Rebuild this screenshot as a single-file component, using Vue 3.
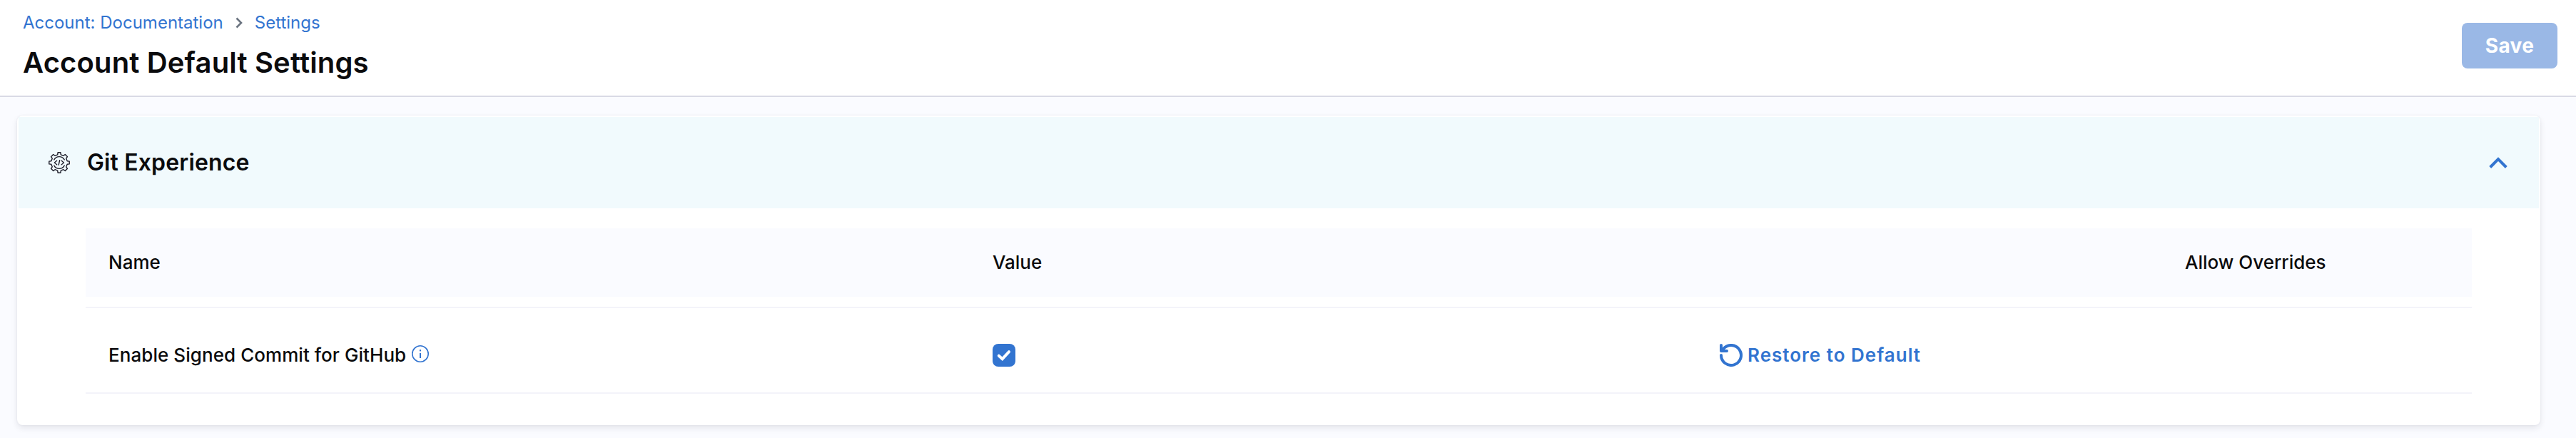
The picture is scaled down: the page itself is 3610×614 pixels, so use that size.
<script setup>
const columns = ['Name', 'Value', '', 'Allow Overrides']
</script>

<template>
  <div class="page">
    <header class="top">
      <div class="heading">
        <nav class="crumbs">
          <a class="link">Account: Documentation</a>
          <svg class="sep" width="10" height="16" viewBox="0 0 10 16">
            <path d="M1.5 1.5L8 8L1.5 14.5" fill="none" stroke="#6b7480" stroke-width="2.6" />
          </svg>
          <a class="link">Settings</a>
        </nav>
        <h1 class="title">Account Default Settings</h1>
      </div>
      <button class="save" disabled>Save</button>
    </header>

    <main class="content">
      <section class="card">
        <div class="card-head">
          <svg class="gear" width="30" height="30" viewBox="0 0 30 30" fill="none" stroke="#1c1c28" stroke-width="1.4" stroke-linejoin="round" stroke-linecap="round">
            <path d="M12.7 3.8L13.1 .8H16.9L17.3 3.8L20.9 5.3L23.3 3.5L26.5 6.7L24.7 9.1L26.2 12.7L29.2 13.1V16.9L26.2 17.3L24.7 20.9L26.5 23.3L23.3 26.5L20.9 24.7L17.3 26.2L16.9 29.2H13.1L12.7 26.2L9.1 24.7L6.7 26.5L3.5 23.3L5.3 20.9L3.8 17.3L.8 16.9V13.1L3.8 12.7L5.3 9.1L3.5 6.7L6.7 3.5L9.1 5.3Z" />
            <path d="M7.8 10.9A8.2 8.2 0 0 1 22.2 10.9M22.2 19.1A8.2 8.2 0 0 1 7.8 19.1" />
            <path d="M11.6 12.3L8.4 15L11.6 17.7M18.2 12.3L21.4 15L18.2 17.7M15.6 11.8L14.2 18.2" />
          </svg>
          <h2 class="card-title">Git Experience</h2>
          <svg class="caret" width="26" height="17" viewBox="0 0 26 17">
            <path d="M1.7 14.5L13 3.2L24.3 14.5" fill="none" stroke="#3274d0" stroke-width="4" />
          </svg>
        </div>

        <div class="table">
          <div class="row thead">
            <div v-for="(c, i) in columns" :key="i" class="cell">{{ c }}</div>
          </div>
          <div class="row setting">
            <div class="cell name">
              <span class="label">Enable Signed Commit for GitHub</span>
              <svg class="info" width="24" height="24" viewBox="0 0 24 24">
                <circle cx="12" cy="12" r="11.2" fill="none" stroke="#3274d0" stroke-width="1.6" />
                <rect x="10.9" y="6.1" width="2.2" height="2.4" rx=".8" fill="#3274d0" />
                <rect x="11" y="11" width="2" height="7" fill="#3274d0" />
              </svg>
            </div>
            <div class="cell">
              <span class="check">
                <svg width="32" height="32" viewBox="0 0 32 32">
                  <path d="M8.8 16.7L13.7 21.2L23 11.2" fill="none" stroke="#fff" stroke-width="4" stroke-linecap="round" stroke-linejoin="miter" />
                </svg>
              </span>
            </div>
            <div class="cell restore">
              <svg width="32" height="32" viewBox="0 0 32 32" fill="none" stroke="#3274d0" stroke-width="4" stroke-linecap="round" stroke-linejoin="round">
                <path d="M2 16A14 14 0 1 0 5 7.3L3.5 9.2" />
                <path d="M2 2V10H10" />
              </svg>
              <span class="label">Restore to Default</span>
            </div>
            <div class="cell"></div>
          </div>
        </div>
      </section>
    </main>
  </div>
</template>

<style>
body {
  margin: 0;
  background: #fafbff;
}
</style>

<style scoped>
.page {
  box-sizing: border-box;
  height: 614px;
  overflow: hidden;
  font-family: Inter, "Liberation Sans", sans-serif;
  color: #0b0b0d;
  background: #fafbff;
}
.top {
  box-sizing: border-box;
  height: 136px;
  padding: 16px 26px 0 32px;
  display: flex;
  justify-content: space-between;
  align-items: flex-start;
  background: #fff;
  border-bottom: 2px solid #d9dae5;
}
.crumbs {
  display: flex;
  align-items: center;
  height: 32px;
  font-size: 24px;
  line-height: 32px;
}
.link {
  color: #3274d0;
}
.sep {
  margin: 0 17px;
}
.title {
  margin: 16px 0 0;
  font-size: 40px;
  line-height: 48px;
  font-weight: 600;
  letter-spacing: 0.14px;
}
.save {
  width: 134px;
  height: 64px;
  margin-top: 16px;
  padding: 0;
  border: 0;
  border-radius: 8px;
  background: #9ab8e6;
  color: #fff;
  font: 700 28px/64px Inter, "Liberation Sans", sans-serif;
  letter-spacing: 0.4px;
}
.content {
  padding: 26px 50px 0 24px;
}
.card {
  box-sizing: border-box;
  height: 434px;
  border: 2px solid #fff;
  border-radius: 8px;
  background: #fff;
  box-shadow: 0 4px 8px rgba(40, 41, 61, 0.1), 0 0 3px rgba(40, 41, 61, 0.06);
}
.card-head {
  box-sizing: border-box;
  height: 128px;
  padding: 0 44px 0 42px;
  display: flex;
  align-items: center;
  background: #f1fafd;
}
.card-title {
  flex: 1;
  margin: 0 0 0 24px;
  font-size: 32px;
  line-height: 40px;
  font-weight: 600;
  letter-spacing: 0.14px;
}
.table {
  margin: 28px 94px 0;
  font-size: 26px;
  line-height: 32px;
  font-weight: 500;
}
.row {
  display: grid;
  grid-template-columns: 1239px 1019px 652px 1fr;
  align-items: center;
  padding-left: 32px;
}
.thead {
  box-sizing: border-box;
  height: 96px;
  padding-bottom: 1px;
  background: #fafbff;
}
.setting {
  height: 118px;
  margin-top: 14px;
  border-top: 2px solid #f3f3fa;
  border-bottom: 2px solid #f3f3fa;
}
.setting .cell {
  margin-top: 14px;
}
.name {
  display: flex;
  align-items: center;
  gap: 8px;
  letter-spacing: 0.06px;
}
.label {
  margin-top: -1px;
}
.info {
  margin-top: -4px;
}
.check {
  display: block;
  width: 32px;
  height: 32px;
  border-radius: 8px;
  background: #3274d0;
}
.check svg {
  display: block;
}
.restore {
  display: flex;
  align-items: center;
  gap: 7px;
  color: #3274d0;
  font-weight: 600;
  letter-spacing: 1px;
}
</style>
